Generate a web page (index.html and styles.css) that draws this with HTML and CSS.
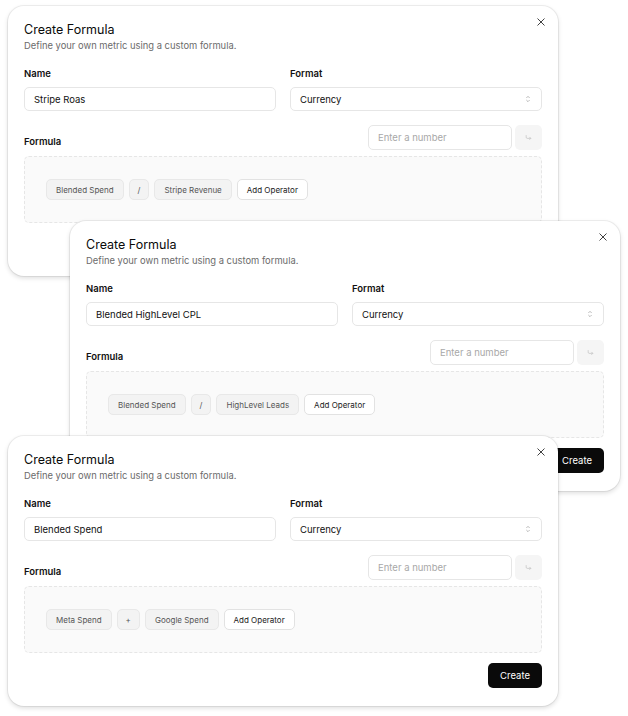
FILE: index.html
```html
<!DOCTYPE html>
<html>
<head>
	<title>Create Formula</title>
	<link rel="stylesheet" href="styles.css">
</head>
<body>
	<div class="stack">
		<div class="dialog">
			<button class="close"><svg viewBox="0 0 24 24"><path d="M18 6 6 18M6 6l12 12"/></svg></button>
			<h2 class="title">Create Formula</h2>
			<p class="desc">Define your own metric using a custom formula.</p>
			<div class="fields">
				<div class="field">
					<label>Name</label>
					<div class="input">Stripe Roas</div>
				</div>
				<div class="field">
					<label>Format</label>
					<div class="input select">Currency <svg viewBox="0 0 24 24"><path d="m7 15 5 5 5-5M7 9l5-5 5 5"/></svg></div>
				</div>
			</div>
			<div class="formula-head">
				<label>Formula</label>
				<div class="number-entry">
					<div class="input placeholder">Enter a number</div>
					<button class="enter"><svg viewBox="0 0 24 24"><path d="m15 10 5 5-5 5"/><path d="M4 4v7a4 4 0 0 0 4 4h12"/></svg></button>
				</div>
			</div>
			<div class="formula-box">
				<span class="chip">Blended Spend</span>
				<span class="chip op">/</span>
				<span class="chip">Stripe Revenue</span>
				<span class="chip add">Add Operator</span>
			</div>
			<div class="actions"><button class="create">Create</button></div>
		</div>

		<div class="dialog shifted">
			<button class="close"><svg viewBox="0 0 24 24"><path d="M18 6 6 18M6 6l12 12"/></svg></button>
			<h2 class="title">Create Formula</h2>
			<p class="desc">Define your own metric using a custom formula.</p>
			<div class="fields">
				<div class="field">
					<label>Name</label>
					<div class="input">Blended HighLevel CPL</div>
				</div>
				<div class="field">
					<label>Format</label>
					<div class="input select">Currency <svg viewBox="0 0 24 24"><path d="m7 15 5 5 5-5M7 9l5-5 5 5"/></svg></div>
				</div>
			</div>
			<div class="formula-head">
				<label>Formula</label>
				<div class="number-entry">
					<div class="input placeholder">Enter a number</div>
					<button class="enter"><svg viewBox="0 0 24 24"><path d="m15 10 5 5-5 5"/><path d="M4 4v7a4 4 0 0 0 4 4h12"/></svg></button>
				</div>
			</div>
			<div class="formula-box">
				<span class="chip">Blended Spend</span>
				<span class="chip op">/</span>
				<span class="chip">HighLevel Leads</span>
				<span class="chip add">Add Operator</span>
			</div>
			<div class="actions"><button class="create">Create</button></div>
		</div>

		<div class="dialog">
			<button class="close"><svg viewBox="0 0 24 24"><path d="M18 6 6 18M6 6l12 12"/></svg></button>
			<h2 class="title">Create Formula</h2>
			<p class="desc">Define your own metric using a custom formula.</p>
			<div class="fields">
				<div class="field">
					<label>Name</label>
					<div class="input">Blended Spend</div>
				</div>
				<div class="field">
					<label>Format</label>
					<div class="input select">Currency <svg viewBox="0 0 24 24"><path d="m7 15 5 5 5-5M7 9l5-5 5 5"/></svg></div>
				</div>
			</div>
			<div class="formula-head">
				<label>Formula</label>
				<div class="number-entry">
					<div class="input placeholder">Enter a number</div>
					<button class="enter"><svg viewBox="0 0 24 24"><path d="m15 10 5 5-5 5"/><path d="M4 4v7a4 4 0 0 0 4 4h12"/></svg></button>
				</div>
			</div>
			<div class="formula-box">
				<span class="chip">Meta Spend</span>
				<span class="chip op">+</span>
				<span class="chip">Google Spend</span>
				<span class="chip add">Add Operator</span>
			</div>
			<div class="actions"><button class="create">Create</button></div>
		</div>
	</div>
</body>
</html>
```

FILE: styles.css
```css
body {
	font-family: Inter, "Liberation Sans", sans-serif;
	margin: 0;
	padding: 0;
	background-color: #fff;
	color: #0a0a0a;
}
.stack {
	display: flex;
	flex-direction: column;
	align-items: flex-start;
	padding: 6px 8px;
}
.dialog {
	position: relative;
	width: 550px;
	height: 270px;
	box-sizing: border-box;
	padding: 15px 16px 18px;
	background-color: #fff;
	border-radius: 16px;
	box-shadow: 0 0 0 1px rgba(0, 0, 0, 0.06), 0 2px 5px rgba(0, 0, 0, 0.14);
	display: flex;
	flex-direction: column;
}
.dialog + .dialog {
	margin-top: -55px;
}
.dialog.shifted {
	margin-left: 62px;
}
.close {
	position: absolute;
	top: 9px;
	right: 10px;
	width: 14px;
	height: 14px;
	padding: 0;
	border: none;
	background: none;
	display: flex;
}
.close svg {
	width: 14px;
	height: 14px;
	fill: none;
	stroke: #333;
	stroke-width: 1.6;
}
.title {
	margin: 0;
	font-size: 12.5px;
	line-height: 17px;
	font-weight: 400;
}
.desc {
	margin: 1px 0 0;
	font-size: 9.4px;
	line-height: 14px;
	color: #6b6b6b;
}
.fields {
	display: grid;
	grid-template-columns: 1fr 1fr;
	column-gap: 14px;
	margin-top: 14px;
}
.field {
	display: flex;
	flex-direction: column;
	gap: 6px;
}
label {
	font-size: 9.5px;
	line-height: 14px;
	font-weight: 600;
	color: #111;
}
.input {
	height: 24px;
	box-sizing: border-box;
	border: 1px solid #e6e6e6;
	border-radius: 5px;
	padding: 0 9px;
	font-size: 9.5px;
	display: flex;
	align-items: center;
	color: #111;
	background-color: #fff;
}
.select {
	justify-content: space-between;
}
.select svg {
	width: 8px;
	height: 8px;
	fill: none;
	stroke: #999;
	stroke-width: 2;
}
.formula-head {
	display: flex;
	justify-content: space-between;
	align-items: flex-end;
	margin-top: 14px;
}
.formula-head label {
	padding-bottom: 1px;
}
.number-entry {
	display: flex;
	gap: 3px;
}
.number-entry .input {
	width: 144px;
	height: 25px;
}
.placeholder {
	color: #a8a8a8;
}
.enter {
	width: 27px;
	height: 25px;
	border: none;
	border-radius: 5px;
	background-color: #f5f5f5;
	padding: 0;
	display: flex;
	align-items: center;
	justify-content: center;
}
.enter svg {
	width: 7px;
	height: 7px;
	fill: none;
	stroke: #b5b5b5;
	stroke-width: 2;
}
.formula-box {
	margin-top: 6px;
	height: 67px;
	box-sizing: border-box;
	border: 1px dashed #e6e6e6;
	border-radius: 5px;
	background-color: #fafafa;
	padding: 0 21px;
	display: flex;
	align-items: center;
	gap: 5px;
}
.chip {
	height: 21px;
	box-sizing: border-box;
	padding: 0 9px;
	border: 1px solid #e8e8e8;
	border-radius: 5px;
	background-color: #f3f3f3;
	font-size: 8px;
	font-weight: 400;
	color: #555;
	display: flex;
	align-items: center;
}
.chip.op {
	padding: 0 8px;
}
.chip.add {
	background-color: #fff;
	border-color: #e2e2e2;
	color: #222;
}
.actions {
	display: flex;
	justify-content: flex-end;
	margin-top: 10px;
}
.create {
	height: 25px;
	padding: 0 12px;
	border: none;
	border-radius: 5px;
	background-color: #0a0a0a;
	color: #fff;
	font-family: Inter, "Liberation Sans", sans-serif;
	font-size: 9.5px;
	font-weight: 400;
}
```
